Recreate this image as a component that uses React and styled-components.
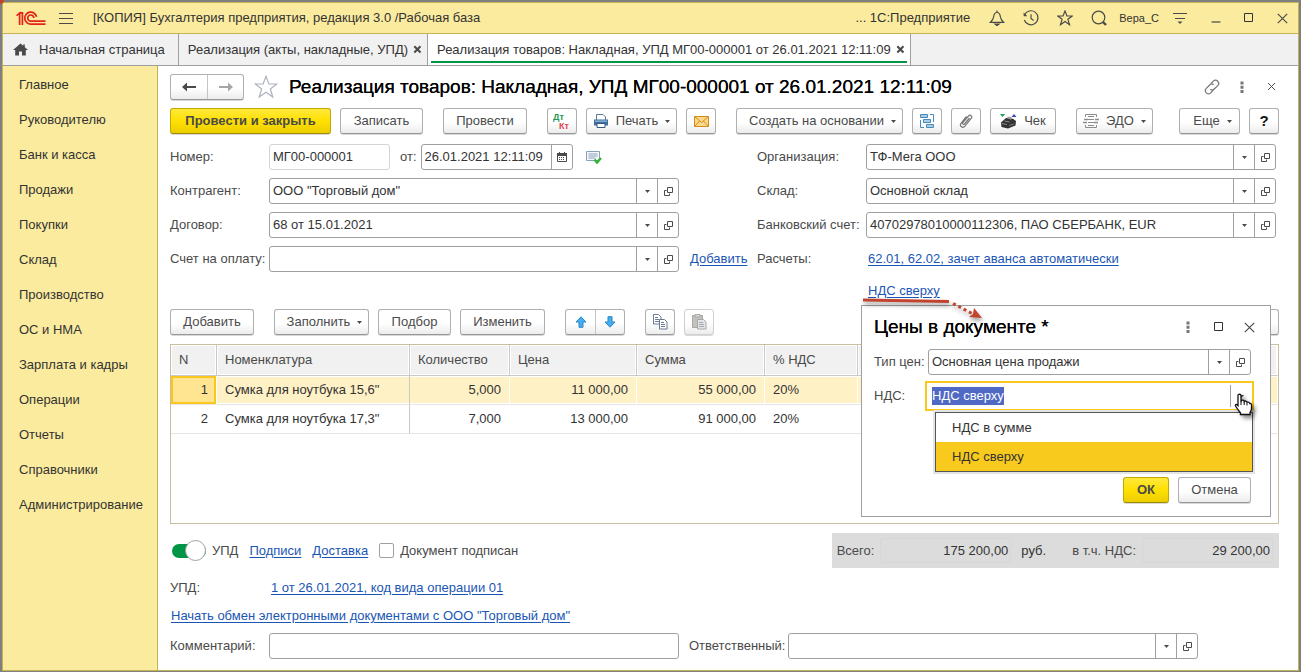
import React, { useEffect, useRef, useState } from 'react'
import styled, { createGlobalStyle, css } from 'styled-components'

const sections = [
  'Главное', 'Руководителю', 'Банк и касса', 'Продажи', 'Покупки', 'Склад', 'Производство',
  'ОС и НМА', 'Зарплата и кадры', 'Операции', 'Отчеты', 'Справочники', 'Администрирование',
]

const goods = [
  { n: 1, name: 'Сумка для ноутбука 15,6"', qty: '5,000', price: '11 000,00', sum: '55 000,00', vat: '20%' },
  { n: 2, name: 'Сумка для ноутбука 17,3"', qty: '7,000', price: '13 000,00', sum: '91 000,00', vat: '20%' },
]

const vatOptions = ['НДС в сумме', 'НДС сверху']

/* ---------- icons ---------- */

const Svg = ({ w = 16, h = w, children, ...rest }) => (
  <svg width={w} height={h} viewBox={`0 0 ${w} ${h}`} fill="none" stroke="#4a4a4a" aria-hidden="true" {...rest}>
    {children}
  </svg>
)

const Logo = () => (
  <Svg w={30} h={16} stroke="#e2231a" strokeWidth="1.7">
    <path d="M.5 5.6 3.6 3.2V15M3.2 2.9H6.4V15" />
    <path d="M20.6 6.9A6 6 0 1 0 15 14.1H29.5" />
    <path d="M17.9 8A3.1 3.1 0 1 0 15 11.2H29.5" />
  </Svg>
)

const BurgerIcon = () => <Svg w={16}><path d="M1 3.5h14M1 8.5h14M1 13.5h14" /></Svg>

const BellIcon = () => (
  <Svg w={16} strokeWidth="1.2">
    <path d="M8 .5v2M1.5 12.3h13C12.4 10.300 11.600 9 11.300 6.500 11 3.800 10 2.500 8 2.500S5 3.800 4.700 6.500C4.400 9 3.600 10.300 1.500 12.300Z" />
    <path d="M6 14h4l-2 1.600Z" fill="#4a4a4a" />
  </Svg>
)

const HistoryIcon = () => (
  <Svg w={16} strokeWidth="1.2">
    <path d="M1.500 5A7 7 0 1 1 1.300 10M8 4.200V8.500l2.600 2" />
    <path d="M.6 2.500v3.800h3.800Z" fill="#4a4a4a" stroke="none" />
  </Svg>
)

const StarIcon = ({ size = 16, color = '#4a4a4a' }) => (
  <svg width={size} height={size} viewBox="0 0 16 16" fill="none" stroke={color} strokeWidth={size > 20 ? 0.8 : 1.2} aria-hidden="true">
    <path d="M8 .9 9.900 6h5.300l-4.300 3.300 1.600 5.400L8 11.500l-4.500 3.200 1.600-5.400L.8 6h5.300Z" />
  </svg>
)

const SearchIcon = () => (
  <Svg w={16} strokeWidth="1.200">
    <circle cx="7.500" cy="7.500" r="6.300" />
    <path d="m12 12 3 3" strokeWidth="2.400" />
  </Svg>
)

const SettingsIcon = () => (
  <Svg w={16}>
    <path d="M1 3.500h14M3 8.500h10" strokeWidth="1.200" />
    <path d="M5.500 11.500h5L8 14Z" fill="#4a4a4a" stroke="none" />
  </Svg>
)

const MinimizeIcon = () => <Svg w={10}><path d="M.5 9H9.500" strokeWidth="1.200" /></Svg>
const MaximizeIcon = () => <Svg w={10}><path d="M.5.5h8v8h-8Z" stroke="#333" /></Svg>
const CloseIcon = () => <Svg w={11}><path d="m.8.8 9.400 9.400M10.200.8.800 10.200" strokeWidth="1.200" /></Svg>
const SmallCloseIcon = () => <Svg w={9}><path d="m1 1 7 7M8 1 1 8" /></Svg>
const TabCloseIcon = () => <Svg w={9}><path d="m1.300 1.300 6.200 6.200M7.500 1.300 1.300 7.500" strokeWidth="2" /></Svg>

const HomeIcon = () => (
  <Svg w={15} h={13} stroke="none">
    <path d="M7.500.5 0 7h2.200v5.500h3.800V8.500h3v4h3.800V7H15L11.800 4.200V1.500h-1.600v1.300Z" fill="#4a4a4a" />
  </Svg>
)

const ArrowIcon = ({ color, flip }) => (
  <Svg w={14} h={10} stroke="none" transform={flip ? 'scale(-1 1)' : undefined}>
    <path d="M0 5 5 .5V4h9v2H5v3.500Z" fill={color} />
  </Svg>
)

const LinkIcon = () => (
  <Svg w={16} stroke="#777" strokeWidth="1.200">
    <path d="m7 4.500 2.300-2.300a3.100 3.100 0 0 1 4.400 4.400L10.300 10a3.100 3.100 0 0 1-4 .3" />
    <path d="m9 11.500-2.300 2.300a3.100 3.100 0 0 1-4.400-4.400L5.700 6a3.100 3.100 0 0 1 4-.3" />
  </Svg>
)

const DotsIcon = () => (
  <Svg w={4} h={12} stroke="none">
    <path d="M.5.5h3v3h-3ZM.5 4.700h3v3h-3ZM.5 8.900h3v3h-3Z" fill="#777" />
  </Svg>
)

const DtKtIcon = () => (
  <Svg w={18} h={17} stroke="none" fontFamily="Liberation Sans, sans-serif" fontSize="9" fontWeight="700">
    <text x="0" y="7" fill="#1f9a50">Дт</text>
    <text x="6" y="16" fill="#e0484c">Кт</text>
  </Svg>
)

const PrinterIcon = () => (
  <Svg w={16} stroke="none">
    <path d="M3.500 1.500h6.500l2.500 2.500v3.500h-9Z" fill="#fff" stroke="#5a7794" />
    <path d="M1 6.500h14v6H1Z" fill="#3f6fa0" />
    <path d="M2 7.500h12v1.200H2Z" fill="#9fc0de" />
    <path d="M4 10.500h8v4H4Z" fill="#fff" stroke="#36597c" />
  </Svg>
)

const MailIcon = () => (
  <Svg w={15} h={11}>
    <path d="M.5.5h14v10H.5Z" fill="#fbd88a" stroke="#d58b1d" />
    <path d="m.5.500 7 6 7-6M.5 10.500 5.500 5M14.500 10.500 9.500 5" stroke="#d58b1d" />
  </Svg>
)

const StructureIcon = () => (
  <Svg w={16} stroke="#4a8ab8">
    <path d="M1.500 1.500h7v3h-7ZM4.500 6.500h7v3h-7ZM7.500 11.500h7v3h-7Z" fill="#a9cde6" />
    <path d="M11 1.500h3.500V9M1.500 7v7.500H5M1.500 9.500V12" />
  </Svg>
)

const ClipIcon = () => (
  <Svg w={14} h={16} stroke="#777" strokeWidth="1.200">
    <path d="m10.500 5-5 6c-.9 1-2.500-.2-1.700-1.300L9.500 3c1.600-1.900 4.400.3 2.900 2.200l-6.500 8c-2.200 2.500-5.800-.3-3.900-2.900L7.500 3.500" />
  </Svg>
)

const ReceiptIcon = () => (
  <Svg w={17} h={15} stroke="none">
    <path d="M0 0h5L2.500 3Z" fill="#1fa04d" />
    <path d="M11.500 3h5L14 0Z" fill="#3a46b8" />
    <path d="M1 8.500 6 4l7 .8 3 2.200-.5 4.500L8 14.500 1.500 13Z" fill="#333" />
    <path d="M6.500 4 9 2.500l3 1-1 2.300Z" fill="#9a9a9a" />
    <path d="m2 9.500 5 1M4.500 7l5 1" stroke="#8a8a8a" />
    <path d="m9 11.500 5-1.500" stroke="#777" />
  </Svg>
)

const EdoIcon = () => (
  <Svg w={16} stroke="#8d8d8d">
    <path d="M2.500 4V1.500h11V4M2.500 12v2.500h11V12M5 3.500h6M5 12.500h6M5 6.500h6M5 9.500h6" />
    <path d="M1 6.500h4M0 9.500h4M12 6.500h4M11 9.500h4" strokeWidth="1.400" />
  </Svg>
)

const CalendarIcon = () => (
  <Svg w={10} h={10} stroke="none">
    <path d="M.5 1.500h9v8h-9Z" stroke="#4a4a4a" />
    <path d="M0 1h10v3H0ZM2 0h1v2H2ZM7 0h1v2H7ZM2 5h1v1H2ZM4 5h1v1H4ZM6 5h1v1H6ZM2 7h1v1H2ZM4 7h1v1H4ZM6 7h1v1H6Z" fill="#4a4a4a" />
  </Svg>
)

const OpenIcon = () => (
  <Svg w={9} h={9}>
    <path d="M3.500.5h5v5h-5ZM2.500 3.500h-2v5h5v-2" />
  </Svg>
)

const CaretIcon = ({ w = 5 }) => (
  <svg width={w} height="3" viewBox="0 0 5 3" aria-hidden="true"><path d="M0 0h5L2.500 3Z" fill="#4a4a4a" /></svg>
)

const PostedIcon = () => (
  <Svg w={16} h={14} stroke="#8aa0b8">
    <path d="M.5 1.500h13v9H.5Z" fill="#f3f7fb" />
    <path d="M2.500 4h9M2.500 6h9M2.500 8h7" />
    <path d="m8.500 9.500 2.500 3L15 8" stroke="#2eb135" strokeWidth="2.400" />
  </Svg>
)

const MoveIcon = ({ down }) => (
  <Svg w={12} h={12} stroke="#2d86c4" transform={down ? 'scale(1 -1)' : undefined}>
    <path d="M6 .8 11 6H8v5.300H4V6H1Z" fill="#45aef0" />
  </Svg>
)

const CopyIcon = () => (
  <Svg w={16} h={16} stroke="#6b7b94">
    <path d="M1.500.5h5l2.500 2.500v7H1.500Z" fill="#fff" />
    <path d="M3 3.500h3M3 5.500h4M3 7.500h4" />
    <path d="M7.500 5.500h5l2.500 2.500v7H7.500Z" fill="#fff" />
    <path d="M9 8.500h3M9 10.500h4M9 12.500h4" />
  </Svg>
)

const PasteIcon = () => (
  <Svg w={15} h={16} stroke="#a8a8a8">
    <path d="M.5 1.500h10v12H.5Z" fill="#c4c1bd" />
    <path d="M3 .5h5v2.500H3Z" fill="#ddd" />
    <path d="M5.500 5.500h6l2.500 2.500v7H5.500Z" fill="#e2e5e9" />
    <path d="M7 8.500h4M7 10.500h5M7 12.500h5" />
  </Svg>
)

/* ---------- form parts ---------- */

const Combo = ({ id, value = '' }) => (
  <FieldBox>
    <input id={id} type="text" defaultValue={value} />
    <button type="button" aria-label="Выбрать"><CaretIcon /></button>
    <button type="button" aria-label="Открыть"><OpenIcon /></button>
  </FieldBox>
)

const PriceDialog = () => {
  const vatInput = useRef(null)
  const [vat, setVat] = useState('НДС сверху')

  useEffect(() => {
    vatInput.current.focus({ preventScroll: true })
    vatInput.current.select()
  }, [])

  return (
    <Dialog role="dialog" aria-labelledby="prices-title">
      <DialogHead>
        <h2 id="prices-title">Цены в документе *</h2>
        <IconButton type="button" aria-label="Меню"><DotsIcon /></IconButton>
        <IconButton type="button" aria-label="Развернуть"><MaximizeIcon /></IconButton>
        <IconButton type="button" aria-label="Закрыть"><CloseIcon /></IconButton>
      </DialogHead>
      <DialogRow>
        <label htmlFor="price-type">Тип цен:</label>
        <Combo id="price-type" value="Основная цена продажи" />
      </DialogRow>
      <DialogRow>
        <label htmlFor="vat">НДС:</label>
        <ActiveField>
          <input id="vat" ref={vatInput} role="combobox" aria-expanded="true" aria-controls="vat-list" value={vat} onChange={e => setVat(e.target.value)} />
          <button type="button" aria-label="Выбрать"><CaretIcon /></button>
          <Options id="vat-list" role="listbox">
            {vatOptions.map(option => (
              <Option key={option} role="option" aria-selected={option === vat} $current={option === vat} onClick={() => setVat(option)}>{option}</Option>
            ))}
          </Options>
          <Hand width="20" height="24" viewBox="0 0 20 24" aria-hidden="true">
            <path d="M4 2.500C4 .8 7 .8 7 2.500V9l.5-1.500c1-.8 2.500-.3 2.700 1 .8-.9 2.500-.5 2.800.8 1-.6 2.500 0 2.800 1.200.8-.2 1.700.4 1.700 1.500v3.500c0 1.500-1 2.500-1.500 4v2H6.500v-1.500C5 18 3.500 16 1.500 13c-.6-1.500 1-2.200 2.500-.5Z" fill="#fff" stroke="#111" strokeWidth="1.300" />
            <path d="M7 9v3M10.200 9v3M13 10v2.500" stroke="#111" />
          </Hand>
        </ActiveField>
      </DialogRow>
      <DialogFoot>
        <Button type="button" $w={46} $primary>ОК</Button>
        <Button type="button" $w={73}>Отмена</Button>
      </DialogFoot>
    </Dialog>
  )
}

const App = () => (
  <>
    <GlobalStyle />
    <Frame>
      <CornerDot />
      <Window>
        <TitleBar>
          <Logo />
          <IconButton type="button" aria-label="Меню"><BurgerIcon /></IconButton>
          <strong>[КОПИЯ] Бухгалтерия предприятия, редакция 3.0 /Рабочая база</strong>
          <span>... 1С:Предприятие</span>
          <TitleTools>
            <IconButton type="button" aria-label="Уведомления"><BellIcon /></IconButton>
            <IconButton type="button" aria-label="История"><HistoryIcon /></IconButton>
            <IconButton type="button" aria-label="Избранное"><StarIcon /></IconButton>
            <IconButton type="button" aria-label="Поиск"><SearchIcon /></IconButton>
          </TitleTools>
          <a href="#user">Вера_С</a>
          <TitleTools>
            <IconButton type="button" aria-label="Настройки"><SettingsIcon /></IconButton>
            <IconButton type="button" aria-label="Свернуть"><MinimizeIcon /></IconButton>
            <IconButton type="button" aria-label="Развернуть"><MaximizeIcon /></IconButton>
            <IconButton type="button" aria-label="Закрыть"><CloseIcon /></IconButton>
          </TitleTools>
        </TitleBar>

        <Tabs>
          <Tab $home><HomeIcon /><button type="button">Начальная страница</button></Tab>
          <Tab>
            <button type="button">Реализация (акты, накладные, УПД)</button>
            <button type="button" aria-label="Закрыть вкладку"><TabCloseIcon /></button>
          </Tab>
          <Tab $active>
            <button type="button">Реализация товаров: Накладная, УПД МГ00-000001 от 26.01.2021 12:11:09</button>
            <button type="button" aria-label="Закрыть вкладку"><TabCloseIcon /></button>
          </Tab>
        </Tabs>

        <Body>
          <Sidebar>
            {sections.map(section => <a key={section} href="#section">{section}</a>)}
          </Sidebar>

          <Main>
            <PageHead>
              <ButtonPair $w={37}>
                <button type="button" aria-label="Назад"><ArrowIcon color="#4a4a4a" /></button>
                <button type="button" aria-label="Вперед"><ArrowIcon color="#a6a6a6" flip /></button>
              </ButtonPair>
              <IconButton type="button" aria-label="В избранное"><StarIcon size={24} color="#a9b2bd" /></IconButton>
              <h1>Реализация товаров: Накладная, УПД МГ00-000001 от 26.01.2021 12:11:09</h1>
              <HeadTools>
                <IconButton type="button" aria-label="Ссылка"><LinkIcon /></IconButton>
                <IconButton type="button" aria-label="Еще"><DotsIcon /></IconButton>
                <IconButton type="button" aria-label="Закрыть"><SmallCloseIcon /></IconButton>
              </HeadTools>
            </PageHead>

            <Toolbar>
              <Group>
                <Button type="button" $w={161} $primary>Провести и закрыть</Button>
                <Button type="button" $w={83}>Записать</Button>
              </Group>
              <Button type="button" $w={84}>Провести</Button>
              <Group>
                <Button type="button" $w={30} aria-label="Проводки"><DtKtIcon /></Button>
                <Button type="button" $w={91}><PrinterIcon />Печать<CaretIcon /></Button>
                <Button type="button" $w={30} aria-label="Отправить"><MailIcon /></Button>
              </Group>
              <Group>
                <Button type="button" $w={167} $menu>Создать на основании<CaretIcon /></Button>
                <Button type="button" $w={30} aria-label="Структура подчиненности"><StructureIcon /></Button>
                <Button type="button" $w={30} aria-label="Файлы"><ClipIcon /></Button>
                <Button type="button" $w={66}><ReceiptIcon />Чек</Button>
              </Group>
              <Button type="button" $w={77}><EdoIcon />ЭДО<CaretIcon /></Button>
              <Group $end>
                <Button type="button" $w={61} $menu>Еще<CaretIcon /></Button>
                <Button type="button" $w={30} $strong>?</Button>
              </Group>
            </Toolbar>

            <Fields>
              <label htmlFor="number">Номер:</label>
              <NumberRow>
                <FieldBox $muted><input id="number" type="text" defaultValue="МГ00-000001" /></FieldBox>
                <label htmlFor="date">от:</label>
                <FieldBox>
                  <input id="date" type="text" defaultValue="26.01.2021 12:11:09" />
                  <button type="button" aria-label="Календарь"><CalendarIcon /></button>
                </FieldBox>
                <PostedIcon />
              </NumberRow>
              <i />
              <label htmlFor="org">Организация:</label>
              <Combo id="org" value="ТФ-Мега ООО" />

              <label htmlFor="partner">Контрагент:</label>
              <Combo id="partner" value={'ООО "Торговый дом"'} />
              <i />
              <label htmlFor="store">Склад:</label>
              <Combo id="store" value="Основной склад" />

              <label htmlFor="contract">Договор:</label>
              <Combo id="contract" value="68 от 15.01.2021" />
              <i />
              <label htmlFor="account">Банковский счет:</label>
              <Combo id="account" value="40702978010000112306, ПАО СБЕРБАНК, EUR" />

              <label htmlFor="invoice">Счет на оплату:</label>
              <Combo id="invoice" />
              <AddCell><Link href="#add">Добавить</Link></AddCell>
              <span>Расчеты:</span>
              <LinkCell><Link href="#settlements">62.01, 62.02, зачет аванса автоматически</Link></LinkCell>

              <VatCell>
                <Link href="#vat">НДС сверху</Link>
                <PriceDialog />
                <Pointer width="126" height="30" viewBox="0 0 126 30" aria-hidden="true">
                  <path d="M2 5 88 6.500" stroke="#c2442e" strokeWidth="3" />
                  <path d="m92 8.500 20 10.500" stroke="#c2442e" strokeWidth="3" strokeDasharray="3 3" />
                  <path d="m113 13 8 10-13-1 4-3Z" fill="#c2442e" />
                </Pointer>
              </VatCell>
            </Fields>

            <Toolbar>
              <Button type="button" $w={84}>Добавить</Button>
              <Group>
                <Button type="button" $w={95} $menu>Заполнить<CaretIcon /></Button>
                <Button type="button" $w={73}>Подбор</Button>
                <Button type="button" $w={85}>Изменить</Button>
              </Group>
              <ButtonPair $w={30}>
                <button type="button" aria-label="Вверх"><MoveIcon /></button>
                <button type="button" aria-label="Вниз"><MoveIcon down /></button>
              </ButtonPair>
              <Group>
                <Button type="button" $w={30} aria-label="Копировать"><CopyIcon /></Button>
                <Button type="button" $w={30} $disabled aria-label="Вставить"><PasteIcon /></Button>
              </Group>
              <Group $end>
                <Button type="button" $w={61} aria-label="Еще"><CaretIcon /></Button>
              </Group>
            </Toolbar>

            <TableBox>
              <Goods>
                <colgroup>
                  <col width="46" /><col width="193" /><col width="100" /><col width="127" />
                  <col width="128" /><col width="93" /><col />
                </colgroup>
                <thead>
                  <tr>
                    <th>N</th><th>Номенклатура</th><th>Количество</th><th>Цена</th><th>Сумма</th><th>% НДС</th><th />
                  </tr>
                </thead>
                <tbody>
                  {goods.map(item => (
                    <Row key={item.n} $selected={item.n === 1}>
                      <Num>{item.n}</Num>
                      <td>{item.name}</td>
                      <Num>{item.qty}</Num>
                      <Num>{item.price}</Num>
                      <Num>{item.sum}</Num>
                      <td>{item.vat}</td>
                      <td />
                    </Row>
                  ))}
                </tbody>
              </Goods>
            </TableBox>

            <Summary>
              <Toggle><input type="checkbox" role="switch" defaultChecked />УПД</Toggle>
              <Link href="#signs">Подписи</Link>
              <Link href="#delivery">Доставка</Link>
              <Check><input type="checkbox" />Документ подписан</Check>
              <Totals>
                <span>Всего:</span>
                <output>175 200,00</output>
                <b>руб.</b>
                <span>в т.ч. НДС:</span>
                <output>29 200,00</output>
              </Totals>
            </Summary>

            <UpdRow><span>УПД:</span><Link href="#upd">1 от 26.01.2021, код вида операции 01</Link></UpdRow>
            <ExchangeRow><Link href="#exchange">Начать обмен электронными документами с ООО "Торговый дом"</Link></ExchangeRow>

            <Footer>
              <label htmlFor="comment">Комментарий:</label>
              <FieldBox><input id="comment" type="text" /></FieldBox>
              <label htmlFor="manager">Ответственный:</label>
              <Combo id="manager" />
            </Footer>
          </Main>
        </Body>
      </Window>
    </Frame>
  </>
)

export default App

const GlobalStyle = createGlobalStyle`
  * {
    box-sizing: border-box;
  }

  body {
    margin: 0;
    font: 13px/18px "Liberation Sans", Arial, sans-serif;
    color: #4a4a4a;
    background: #7f7f7f;
  }

  input, button {
    font: inherit;
    color: inherit;
  }

  svg {
    flex: none;
  }
`

const Frame = styled.div`
  position: relative;
  display: flex;
  min-height: 100vh;
  padding: 2px 2px 1px;
`

const CornerDot = styled.i`
  position: absolute;
  left: -4px;
  top: -4px;
  width: 8px;
  height: 8px;
  border-radius: 50%;
  background: #c2442e;
`

const Window = styled.div`
  flex: 1;
  display: flex;
  flex-direction: column;
  min-width: 0;
  border: 1px solid #c4b254;
  background: #fff;
`

const IconButton = styled.button`
  display: flex;
  align-items: center;
  justify-content: center;
  padding: 0;
  border: none;
  background: none;
  cursor: pointer;
`

const TitleBar = styled.header`
  display: flex;
  align-items: center;
  height: 31px;
  padding: 0 10px 0 13px;
  background: #fbeb9e;
  border-bottom: 1px solid #c4b254;
  color: #333;

  > button {
    margin: 0 19px 0 12px;
  }

  strong {
    flex: 1;
    font-weight: 400;
    white-space: nowrap;
  }

  a {
    margin: 0 13px 0 12px;
    font-size: 11px;
    color: inherit;
    text-decoration: none;
  }
`

const TitleTools = styled.div`
  display: flex;
  align-items: center;
  gap: 18px;

  span + & {
    margin-left: 19px;
  }

  a + & {
    gap: 23px;
  }
`

const Tabs = styled.nav`
  display: flex;
  height: 32px;
  background: #f1f1f1;
  border-bottom: 1px solid #a0a0a0;
  color: #333;
`

const Tab = styled.div`
  position: relative;
  display: flex;
  align-items: center;
  gap: 5px;
  padding: 0 5px 0 9px;
  border-right: 1px solid #a0a0a0;
  white-space: nowrap;

  button {
    display: flex;
    padding: 0;
    border: none;
    background: none;
    cursor: pointer;
  }

  ${props => props.$home && css`
    gap: 11px;
    padding: 0 13px 0 10px;
  `}

  ${props => props.$active && css`
    background: #fff;

    &::after {
      content: "";
      position: absolute;
      left: 3px;
      right: 3px;
      bottom: 2px;
      height: 2px;
      background: #009646;
    }
  `}
`

const Body = styled.div`
  flex: 1;
  display: flex;
`

const Sidebar = styled.nav`
  flex: none;
  width: 155px;
  padding: 1px 0 0 16px;
  background: #fbeb9e;
  border-right: 1px solid #c4b254;

  a {
    display: block;
    line-height: 35px;
    height: 35px;
    color: #333;
    text-decoration: none;
    white-space: nowrap;
  }
`

const Main = styled.main`
  flex: 1;
  display: flex;
  flex-direction: column;
  min-width: 0;
  padding: 8px 19px 11px 12px;
`

const PageHead = styled.div`
  display: flex;
  align-items: center;
  height: 25px;
  margin-bottom: 9px;

  > button {
    margin: 0 11px 0 10px;
  }

  h1 {
    flex: 1;
    margin: 0;
    font-size: 19px;
    line-height: 24px;
    font-weight: 400;
    color: #000;
    text-shadow: 0 0 0 #000;
    white-space: nowrap;
  }
`

const HeadTools = styled.div`
  display: flex;
  gap: 20px;
  padding-right: 3px;

  button:last-child {
    margin-left: 3px;
  }
`

const Toolbar = styled.div`
  display: flex;
  gap: 20px;
`

const Group = styled.div`
  display: flex;
  gap: 9px;
  margin-left: ${props => props.$end ? 'auto' : 0};
`

const raised = css`
  border: 1px solid #b0b0b0;
  border-bottom-color: #979797;
  border-radius: 3px;
  background: linear-gradient(#fff 55%, #ececec);
  box-shadow: 0 1px 0 #d9d9d9;
`

const Button = styled.button`
  ${raised}
  display: flex;
  align-items: center;
  justify-content: center;
  gap: 7px;
  flex: none;
  width: ${props => props.$w}px;
  height: 26px;
  padding: 0 0 0 ${props => props.$menu ? 6 : 0}px;
  white-space: nowrap;
  cursor: pointer;

  ${props => props.$primary && css`
    font-weight: 700;
    border-color: #c2a800;
    border-bottom-color: #a08b00;
    background: linear-gradient(#ffe93d, #ffe000 50%, #eccd00);
  `}

  ${props => props.$strong && css`
    font-size: 15px;
    font-weight: 700;
    color: #111;
  `}

  ${props => props.$disabled && css`
    border-color: #d0d0d0;
  `}
`

const ButtonPair = styled.div`
  ${raised}
  display: flex;
  flex: none;
  height: 26px;

  button {
    display: flex;
    align-items: center;
    justify-content: center;
    width: ${props => props.$w - 1}px;
    padding: 0;
    border: none;
    background: none;
    cursor: pointer;
  }

  button + button {
    border-left: 1px solid #c4c4c4;
  }
`

const FieldBox = styled.div`
  display: flex;
  min-width: 0;
  height: 26px;
  border: 1px solid ${props => props.$muted ? '#d4d4d4' : '#a0a0a0'};
  border-radius: 3px;
  background: #fff;

  input {
    flex: 1;
    min-width: 0;
    padding: 0 3px;
    border: none;
    outline: none;
    background: none;
    color: #333;
  }

  button {
    display: flex;
    align-items: center;
    justify-content: center;
    flex: none;
    width: 21px;
    padding: 0;
    border: none;
    border-left: 1px solid #a0a0a0;
    background: none;
    cursor: pointer;
  }
`

const Link = styled.a`
  color: #1a56b4;
  text-decoration: underline;
  text-underline-offset: 2px;
  white-space: nowrap;
`

const Fields = styled.div`
  display: grid;
  grid-template-columns: 99px 1fr 78px 109px 1fr;
  grid-auto-rows: 26px;
  align-items: center;
  row-gap: 8px;
  margin: 10px 3px 3px 0;
  white-space: nowrap;
`

const NumberRow = styled.div`
  display: flex;
  align-items: center;

  > div:first-child {
    width: 121px;
  }

  > label {
    margin: 0 4px 0 10px;
  }

  > label + div {
    width: 152px;
    margin-right: 13px;
  }
`

const AddCell = styled.div`
  padding-left: 11px;
`

const LinkCell = styled.div`
  padding-left: 2px;
`

const VatCell = styled.div`
  position: relative;
  grid-column: 5;
  height: 26px;
  padding: 2px;
`

const Pointer = styled.svg`
  position: absolute;
  left: -5px;
  top: 15px;
  z-index: 2;
  fill: none;
  filter: drop-shadow(1px 3px 2px #00000066);
`

const Dialog = styled.section`
  position: absolute;
  z-index: 1;
  left: -5px;
  top: 25px;
  width: 100%;
  height: 212px;
  padding: 7px 19px 12px 12px;
  border: 1px solid #a0a0a0;
  background: #fff;
`

const DialogHead = styled.div`
  display: flex;
  align-items: center;
  height: 28px;
  margin-bottom: 8px;

  h2 {
    flex: 1;
    margin: 0;
    font-size: 19px;
    line-height: 24px;
    font-weight: 400;
    color: #000;
    text-shadow: 0 0 0 #000;
  }

  button {
    width: 31px;
  }

  button:last-child {
    margin-right: -14px;
  }
`

const DialogRow = styled.div`
  display: grid;
  grid-template-columns: 54px 1fr;
  align-items: center;
  margin-bottom: 6px;
`

const ActiveField = styled(FieldBox)`
  position: relative;
  height: 30px;
  margin: 0 -3px;
  border: 2px solid #f8c81e;
  border-radius: 0;

  input {
    padding: 0 5px;
  }

  input::selection {
    color: #fff;
    background: #5069c4;
  }

  button {
    margin: 2px 0;
    width: 22px;
  }
`

const Options = styled.ul`
  position: absolute;
  left: 8px;
  right: -1px;
  top: 29px;
  margin: 0;
  padding: 0;
  list-style: none;
  border: 1px solid #555;
  background: #fff;
  box-shadow: 0 0 0 2px #e4e4e4;
`

const Option = styled.li`
  padding-left: 16px;
  height: 29px;
  line-height: 29px;
  color: #333;
  background: ${props => props.$current ? '#f9ca1e' : '#fff'};
`

const Hand = styled.svg`
  position: absolute;
  right: -2px;
  top: 10px;
  fill: none;
  filter: drop-shadow(3px 3px 2px #00000077);
`

const DialogFoot = styled.div`
  display: flex;
  justify-content: flex-end;
  gap: 9px;
  margin-top: 66px;
`

const TableBox = styled.div`
  flex: 1;
  margin: 9px 0;
  border: 1px solid #c8bfa0;
`

const Goods = styled.table`
  width: 100%;
  table-layout: fixed;
  border-collapse: separate;
  border-spacing: 0;
  white-space: nowrap;

  th {
    height: 31px;
    padding: 0 8px;
    font-weight: 400;
    text-align: left;
    background: #f1f1f1;
    border-right: 1px solid #c9c9c9;
    border-bottom: 1px solid #c9c9c9;
    box-shadow: inset 0 0 0 1px #fff;
  }

  td {
    height: 29px;
    padding: 0 8px;
    color: #333;
    border-right: 1px solid #fff;
    border-bottom: 1px solid #e5e5e5;
    box-shadow: inset 0 1px #fff, inset 0 -1px #fff;
  }

  td:nth-child(2) {
    border-right-color: #c9c9c9;
  }

  th:last-child {
    border-right-color: #fff;
  }
`

const Row = styled.tr`
  background: ${props => props.$selected ? '#fff1c6' : '#fff'};

  ${props => props.$selected && css`
    td:first-child {
      background: #ffe591;
      box-shadow: inset 0 0 0 2px #f8c81e;
    }
  `}
`

const Num = styled.td`
  text-align: right;
`

const Summary = styled.div`
  display: flex;
  align-items: center;
  gap: 11px;
  height: 35px;
  white-space: nowrap;
`

const Toggle = styled.label`
  display: flex;
  align-items: center;
  gap: 6px;
  padding-left: 2px;

  input {
    appearance: none;
    display: flex;
    align-items: center;
    justify-content: flex-end;
    width: 34px;
    height: 14px;
    margin: 0;
    border-radius: 7px;
    background: #009646;
  }

  input::after {
    content: "";
    width: 19px;
    height: 19px;
    flex: none;
    border: 1px solid #a0a0a0;
    border-radius: 50%;
    background: #fff;
  }
`

const Check = styled.label`
  display: flex;
  align-items: center;
  gap: 6px;

  input {
    appearance: none;
    width: 15px;
    height: 15px;
    margin: 0;
    border: 1px solid #a0a0a0;
    border-radius: 2px;
    background: #fff;
  }
`

const Totals = styled.div`
  display: flex;
  align-items: center;
  height: 35px;
  margin-left: auto;
  padding: 0 6px 0 5px;
  background: #dcdcdc;

  output {
    width: 131px;
    height: 25px;
    margin-left: 6px;
    padding: 0 2px;
    line-height: 23px;
    text-align: right;
    color: #333;
    border: 1px solid #d7d7d7;
    border-radius: 3px;
  }

  b {
    margin: 0 26px 0 10px;
    font-weight: 400;
    color: #333;
  }
`

const UpdRow = styled.div`
  display: grid;
  grid-template-columns: 101px 1fr;
  margin-top: 11px;
`

const ExchangeRow = styled.div`
  margin: 10px 0 8px;
  padding-left: 1px;
`

const Footer = styled.div`
  display: grid;
  grid-template-columns: 99px 1fr 109px 1fr 78px;
  align-items: center;
  margin-right: 3px;

  > div + label {
    padding-left: 10px;
  }
`
